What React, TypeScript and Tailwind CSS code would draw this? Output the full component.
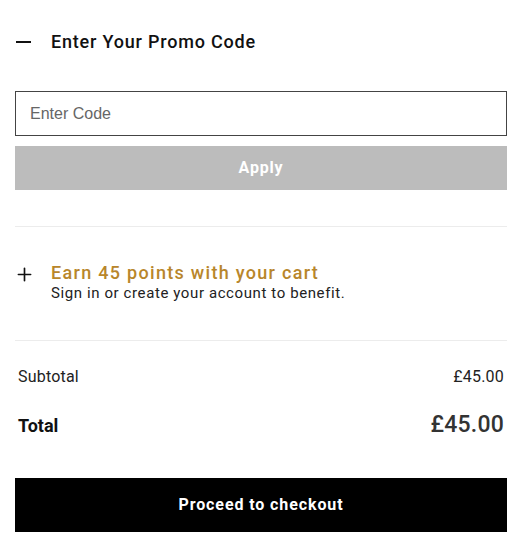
import { Plus } from 'lucide-react'

export default function App() {
  return (
    <div className="w-[522px] h-[534px] bg-white px-[15px] font-['Roboto',sans-serif] text-[#111]">
      <div className="flex items-center h-[91px] pb-[8px]">
        <span className="w-[36px] flex items-center">
          <span className="block w-[15px] h-[2px] bg-[#111] ml-[1px]" />
        </span>
        <h2 className="text-[18px] font-medium tracking-[0.8px]">Enter Your Promo Code</h2>
      </div>

      <div className="flex flex-col gap-[10px]">
        <input
          placeholder="Enter Code"
          className="h-[45px] w-full border border-[#444] px-[14px] text-[16px] font-['Liberation_Sans',sans-serif] placeholder:text-[#666] outline-none"
        />
        <button
          type="button"
          className="h-[44px] w-full bg-[#bcbcbc] text-white text-[16px] font-bold tracking-[0.8px]"
        >
          Apply
        </button>
      </div>

      <div className="mt-[36px] border-t border-[#ececec]" />

      <div className="flex items-start pt-[35px] pb-[38px]">
        <span className="w-[36px] pt-[2px]">
          <Plus size={21} strokeWidth={1.9} className="text-[#111] -ml-[1px]" />
        </span>
        <div>
          <p className="text-[18px] font-medium text-[#b8862b] leading-[22px] tracking-[1.3px]">
            Earn 45 points with your cart
          </p>
          <p className="text-[15px] text-[#222] leading-[18px] tracking-[0.6px]">
            Sign in or create your account to benefit.
          </p>
        </div>
      </div>

      <div className="border-t border-[#ececec]" />

      <div className="flex justify-between items-center px-[3px] pt-[24px] text-[16px] text-[#222] tracking-[0.2px]">
        <span>Subtotal</span>
        <span>£45.00</span>
      </div>

      <div className="flex justify-between items-center px-[3px] pt-[19px]">
        <span className="text-[18px] font-bold">Total</span>
        <span className="text-[23px] font-medium text-[#333] tracking-[0.2px]">£45.00</span>
      </div>

      <button
        type="button"
        className="mt-[35px] h-[54px] w-full bg-black text-white text-[16px] font-bold tracking-[0.9px]"
      >
        Proceed to checkout
      </button>
    </div>
  )
}
